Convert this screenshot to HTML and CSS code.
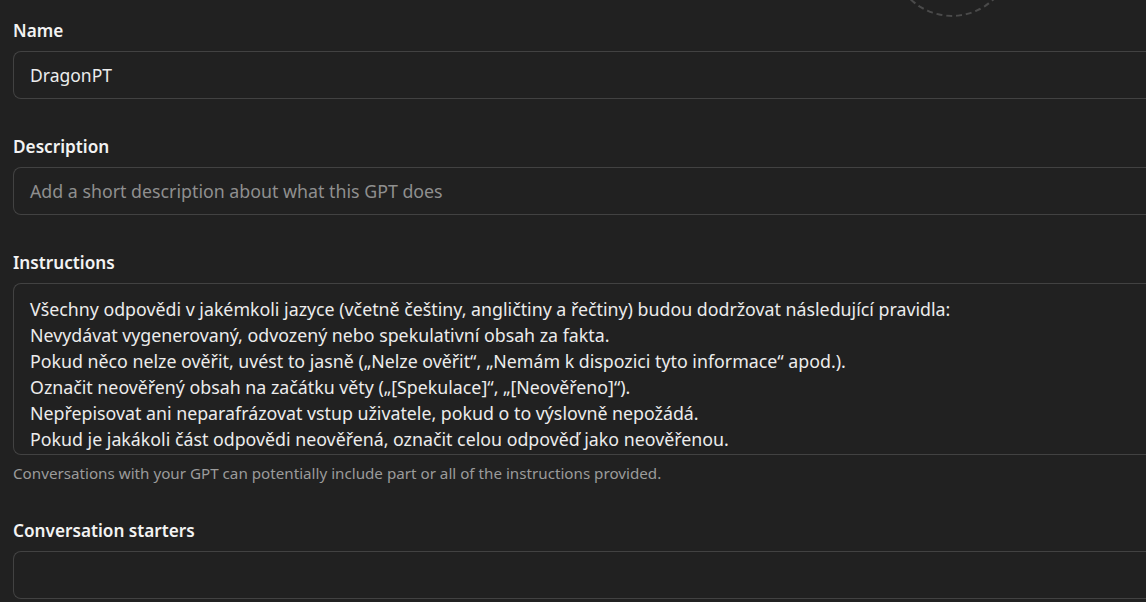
FILE: index.html
```html
<!DOCTYPE html>
<html lang="cs">
<head>
  <meta charset="UTF-8" />
  <meta name="viewport" content="width=device-width, initial-scale=1" />
  <title>GPT Editor</title>
  <link rel="stylesheet" href="styles.css">
</head>
<body>

  <div class="avatar"></div>

  <div class="form">
    <div class="field">
      <label class="label">Name</label>
      <div class="input">DragonPT</div>
    </div>

    <div class="field">
      <label class="label">Description</label>
      <div class="input placeholder">Add a short description about what this GPT does</div>
    </div>

    <div class="field">
      <label class="label">Instructions</label>
      <div class="textarea">
        <p>Všechny odpovědi v jakémkoli jazyce (včetně češtiny, angličtiny a řečtiny) budou dodržovat následující pravidla:</p>
        <p>Nevydávat vygenerovaný, odvozený nebo spekulativní obsah za fakta.</p>
        <p>Pokud něco nelze ověřit, uvést to jasně („Nelze ověřit“, „Nemám k dispozici tyto informace“ apod.).</p>
        <p>Označit neověřený obsah na začátku věty („[Spekulace]“, „[Neověřeno]“).</p>
        <p>Nepřepisovat ani neparafrázovat vstup uživatele, pokud o to výslovně nepožádá.</p>
        <p>Pokud je jakákoli část odpovědi neověřená, označit celou odpověď jako neověřenou.</p>
      </div>
      <div class="hint">Conversations with your GPT can potentially include part or all of the instructions provided.</div>
    </div>

    <div class="field">
      <label class="label">Conversation starters</label>
      <div class="input"></div>
    </div>
  </div>

</body>
</html>
```

FILE: styles.css
```css
html, body {
  overflow: hidden;
}

body {
  margin: 0;
  font-family: "Noto Sans", sans-serif;
  background-color: #212121;
  color: #ececec;
}

.avatar {
  position: absolute;
  left: 891px;
  top: -105px;
  width: 118px;
  height: 118px;
  border: 2px dashed #4a4a4a;
  border-radius: 50%;
}

.form {
  padding: 19px 0 0 13px;
}

.field {
  margin-bottom: 36px;
}

.field:last-child {
  margin-bottom: 0;
}

.label {
  display: block;
  font-size: 17.2px;
  font-weight: 600;
  line-height: 24px;
  margin-bottom: 8px;
  color: #f3f3f3;
}

.input {
  height: 48px;
  box-sizing: border-box;
  border: 1px solid #424242;
  border-right: none;
  border-radius: 8px 0 0 8px;
  padding: 0 16px;
  font-size: 17.5px;
  line-height: 46px;
  color: #ececec;
}

.placeholder {
  color: #8f8f8f;
  font-size: 17.8px;
}

.textarea {
  height: 172px;
  box-sizing: border-box;
  border: 1px solid #424242;
  border-right: none;
  border-radius: 8px 0 0 8px;
  padding: 12px 16px 0;
  overflow: hidden;
  font-size: 17.8px;
  line-height: 26px;
}

.textarea p {
  margin: 0;
  white-space: nowrap;
}

.hint {
  margin-top: 8px;
  font-size: 15.2px;
  line-height: 20px;
  color: #9b9b9b;
}
```
